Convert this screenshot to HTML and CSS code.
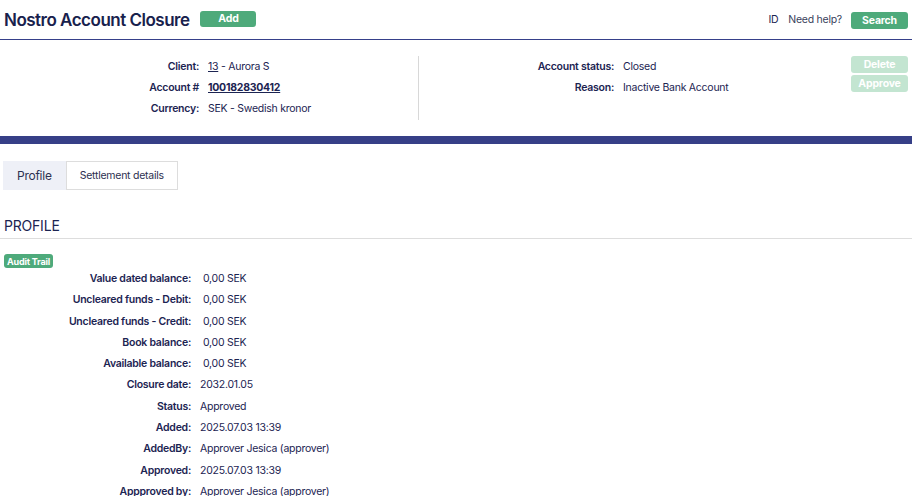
FILE: index.html
```html
<!DOCTYPE html>
<html lang="en">
<head>
    <meta charset="UTF-8">
    <meta name="viewport" content="width=device-width, initial-scale=1.0">
    <title>Nostro Account Closure</title>
    <link rel="stylesheet" href="styles.css">
</head>
<body>
    <div class="topbar">
        <h1 class="title">Nostro Account Closure</h1>
        <button class="btn add">Add</button>
        <div class="spacer"></div>
        <span class="id">ID</span>
        <span class="help">Need help?</span>
        <button class="btn search">Search</button>
    </div>
    <div class="summary">
        <div class="col left">
            <div class="row"><span class="lbl">Client:</span><span class="val"><a href="#" class="lnk">13</a> - Aurora S</span></div>
            <div class="row"><span class="lbl">Account #</span><span class="val"><a href="#" class="acc">100182830412</a></span></div>
            <div class="row"><span class="lbl">Currency:</span><span class="val">SEK - Swedish kronor</span></div>
        </div>
        <div class="col right">
            <div class="row"><span class="lbl">Account status:</span><span class="val">Closed</span></div>
            <div class="row"><span class="lbl">Reason:</span><span class="val">Inactive Bank Account</span></div>
        </div>
        <div class="actions">
            <button class="btn pale">Delete</button>
            <button class="btn pale">Approve</button>
        </div>
    </div>
    <div class="band"></div>
    <div class="tabs">
        <div class="tab active">Profile</div>
        <div class="tab">Settlement details</div>
    </div>
    <h2 class="section">PROFILE</h2>
    <button class="btn audit">Audit Trail</button>
    <div class="details">
        <div class="drow"><span class="lbl">Value dated balance:</span><span class="val">0,00 SEK</span></div>
        <div class="drow"><span class="lbl">Uncleared funds - Debit:</span><span class="val">0,00 SEK</span></div>
        <div class="drow"><span class="lbl">Uncleared funds - Credit:</span><span class="val">0,00 SEK</span></div>
        <div class="drow"><span class="lbl">Book balance:</span><span class="val">0,00 SEK</span></div>
        <div class="drow"><span class="lbl">Available balance:</span><span class="val">0,00 SEK</span></div>
        <div class="drow"><span class="lbl">Closure date:</span><span class="val wide">2032.01.05</span></div>
        <div class="drow"><span class="lbl">Status:</span><span class="val wide">Approved</span></div>
        <div class="drow"><span class="lbl">Added:</span><span class="val wide">2025.07.03 13:39</span></div>
        <div class="drow"><span class="lbl">AddedBy:</span><span class="val wide">Approver Jesica (approver)</span></div>
        <div class="drow"><span class="lbl">Approved:</span><span class="val wide">2025.07.03 13:39</span></div>
        <div class="drow"><span class="lbl">Appproved by:</span><span class="val wide">Approver Jesica (approver)</span></div>
    </div>
</body>
</html>
```

FILE: styles.css
```css
body { margin: 0; padding: 0; font-family: Inter, "Liberation Sans", sans-serif; font-size: 10.5px; letter-spacing: -0.25px; color: #1c2452; background: #fff}
.topbar { display: flex; align-items: center; height: 39px; padding: 0 4px; border-bottom: 1px solid #36408a}
.title { margin: 0; font-size: 17px; font-weight: 600; letter-spacing: -0.5px; color: #18214d}
.spacer { flex: 1}
.btn { border: none; border-radius: 3px; color: #fff; font-family: inherit; font-weight: 700; font-size: 10.5px; letter-spacing: -0.2px; background: #4eaa7b; cursor: pointer; padding: 0}
.add { width: 56px; height: 16px; margin-left: 11px; margin-top: -2px}
.id { color: #1c2452; margin-right: 10px}
.help { color: #3a3f5c; margin-right: 9px}
.search { width: 57px; height: 17px; margin-top: 2px}
.summary { display: flex; height: 96px; align-items: flex-start}
.col .row { display: flex; height: 21px; line-height: 21px}
.col .lbl { font-weight: 600; text-align: right; padding-right: 9px}
.left { width: 418px; border-right: 1px solid #d8d8d8; height: 64px; margin-top: 16px}
.right { padding-top: 16px}
.left .lbl { width: 199px}
.right .lbl { width: 195px}
.lnk { color: #1c2452; text-decoration: underline}
.acc { color: #1c2452; font-weight: 700; text-decoration: underline}
.actions { margin-left: auto; margin-right: 4px; padding-top: 16px; display: flex; flex-direction: column; gap: 2px}
.pale { background: #c3e5d1; width: 57px; height: 17px}
.band { height: 8px; background: #363f87}
.tabs { display: flex; margin: 17px 0 0 3px}
.tab { height: 27px; line-height: 27px; padding: 0 13px; border: 1px solid #ddd; color: #2c3050}
.tab.active { background: #eef0f7; border-color: #eef0f7; font-size: 12px; padding: 0 13px}
.section { margin: 27px 0 0; padding: 0 4px 4px; font-size: 14px; font-weight: 400; letter-spacing: -0.2px; color: #1c2452; border-bottom: 1px solid #ddd}
.audit { margin: 15px 0 0 4px; width: 49px; height: 14px; font-size: 9px; display: block}
.drow { display: flex; height: 21.3px; line-height: 21.3px}
.drow .lbl { width: 191px; text-align: right; font-weight: 600; padding-right: 12px}
.drow .val.wide { margin-left: -3px}
```
